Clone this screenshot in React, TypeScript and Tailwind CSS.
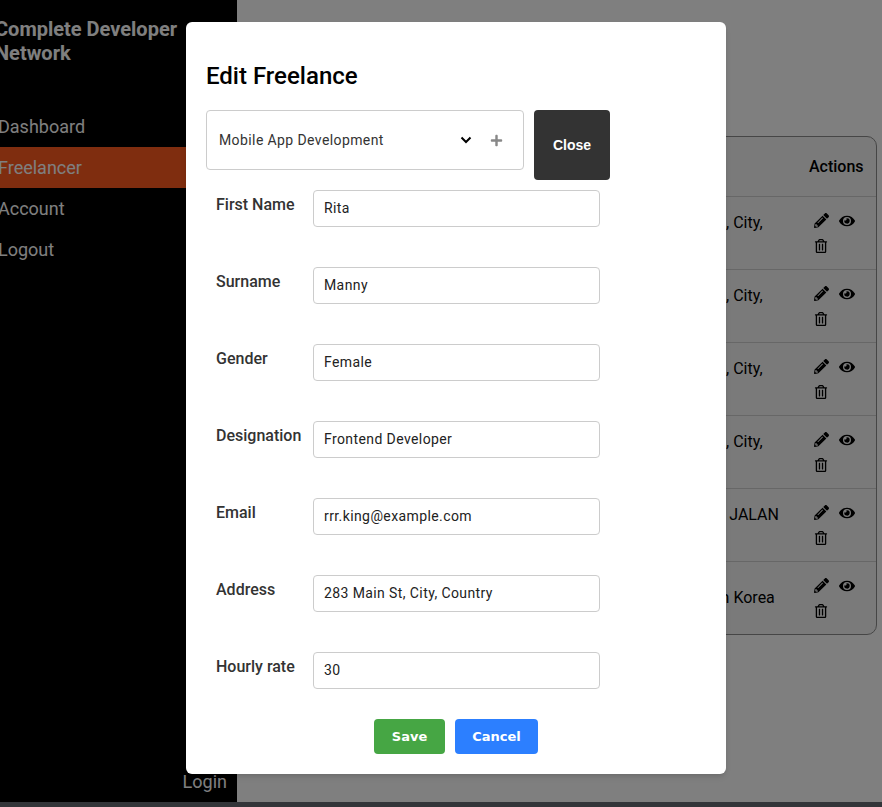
import { FaEye, FaPencilAlt, FaPlus, FaRegTrashAlt } from "react-icons/fa";

const navItems = ["Dashboard", "Freelancer", "Account", "Logout"];

const fields = [
  { label: "First Name", value: "Rita" },
  { label: "Surname", value: "Manny" },
  { label: "Gender", value: "Female" },
  { label: "Designation", value: "Frontend Developer" },
  { label: "Email", value: "rrr.king@example.com" },
  { label: "Address", value: "283 Main St, City, Country" },
  { label: "Hourly rate", value: "30" },
];

const rows = [
  { name: "Rita Manny", address: "283 Main St, City, Country" },
  { name: "Sam King", address: "283 Main St, City, Country" },
  { name: "Ken Reed", address: "283 Main St, City, Country" },
  { name: "Ann Cole", address: "283 Main St, City, Country" },
  { name: "Ali Omar", address: "12 LORONG JALAN BESAR 3" },
  { name: "Min Park", address: "Seoul, South Korea" },
];

function Sidebar() {
  return (
    <aside className="flex h-full w-[237px] shrink-0 flex-col overflow-hidden bg-black pt-[17px] text-[#fff]">
      <h1 className="ml-[-5px] w-[190px] text-[20px] leading-[24px] font-bold">
        Complete Developer Network
      </h1>
      <nav className="mt-[41px] flex flex-col">
        {navItems.map((item) => (
          <a
            key={item}
            className={`flex h-[41px] items-center pl-[-2px] text-[18px] ${
              item === "Freelancer" ? "bg-[#ff5a1f]" : ""
            }`}
          >
            <span className="ml-[-2px]">{item}</span>
          </a>
        ))}
      </nav>
      <div className="mt-auto pr-[10px] pb-[8px] text-right text-[18px] leading-[24px]">Login</div>
    </aside>
  );
}

function FreelancerTable() {
  return (
    <main className="flex-1 pt-[136px] pr-[5px] pl-[20px]">
      <div className="rounded-[10px] border border-[#8c8c8c] bg-[#f5f5f5] text-[16px] leading-[20px] text-black">
        <div className="grid h-[59px] grid-cols-[140px_243px_155px_1fr] items-center font-medium">
          <span className="pl-[12px]">Name</span>
          <span>Email</span>
          <span>Address</span>
          <span className="pl-[13px]">Actions</span>
        </div>
        {rows.map((row) => (
          <div
            key={row.name}
            className="grid h-[73px] grid-cols-[140px_243px_155px_1fr] items-center border-t border-[#cfcfcf]"
          >
            <span className="pl-[12px]">{row.name}</span>
            <span>user@example.com</span>
            <span className="w-[138px]">{row.address}</span>
            <div className="flex flex-wrap pl-[18px] text-[15px]">
              <div className="flex h-[25px] w-full items-center gap-[10px]">
                <FaPencilAlt />
                <FaEye className="text-[16px]" />
              </div>
              <div className="flex h-[25px] w-full items-center">
                <FaRegTrashAlt className="text-[14px]" />
              </div>
            </div>
          </div>
        ))}
      </div>
    </main>
  );
}

function EditModal() {
  return (
    <div className="absolute inset-0 bg-black/50">
      <div className="absolute top-[22px] left-[186px] h-[752px] w-[540px] rounded-[6px] bg-white px-[20px] pt-[40px] shadow-md">
        <h2 className="text-[24px] leading-[28px] font-medium text-black">Edit Freelance</h2>
        <div className="mt-[20px] flex items-start gap-[10px]">
          <div className="flex h-[60px] w-[318px] items-center rounded-[4px] border border-[#ccc] pr-[20px] pl-[12px] text-[14px] tracking-[0.4px] text-[#333]">
            <span className="flex-1">Mobile App Development</span>
            <svg width="12" height="8" viewBox="0 0 12 8" className="mr-[18px]">
              <path d="M1.5 1.5 6 6l4.5-4.5" fill="none" stroke="#000" strokeWidth="2" />
            </svg>
            <FaPlus className="text-[13px] text-[#888]" />
          </div>
          <button className="h-[70px] w-[76px] rounded-[4px] bg-[#333] font-['Liberation_Sans',sans-serif] text-[14px] font-bold text-white">
            Close
          </button>
        </div>
        <div className="mt-[10px] flex flex-col gap-[40px]">
          {fields.map((field) => (
            <div key={field.label} className="flex items-start">
              <label className="w-[107px] pl-[10px] text-[16px] leading-[30px] font-medium text-[#333]">
                {field.label}
              </label>
              <div className="flex h-[37px] w-[287px] items-center rounded-[4px] border border-[#ccc] px-[10px] text-[14px] tracking-[0.4px] text-[#222]">
                {field.value}
              </div>
            </div>
          ))}
        </div>
        <div className="mt-[30px] flex w-[500px] justify-center gap-[10px] pr-[0px] font-['DejaVu_Sans',sans-serif] text-[13px] font-bold text-white">
          <button className="h-[35px] w-[71px] rounded-[4px] bg-[#46a644]">Save</button>
          <button className="h-[35px] w-[83px] rounded-[4px] bg-[#2c7fff]">Cancel</button>
        </div>
      </div>
    </div>
  );
}

export default function App() {
  return (
    <div className="relative h-[807px] w-[882px] overflow-hidden bg-white font-['Roboto',sans-serif]">
      <div className="flex h-[802px]">
        <Sidebar />
        <FreelancerTable />
      </div>
      <div className="h-[5px] bg-[#666b73]" />
      <EditModal />
    </div>
  );
}
